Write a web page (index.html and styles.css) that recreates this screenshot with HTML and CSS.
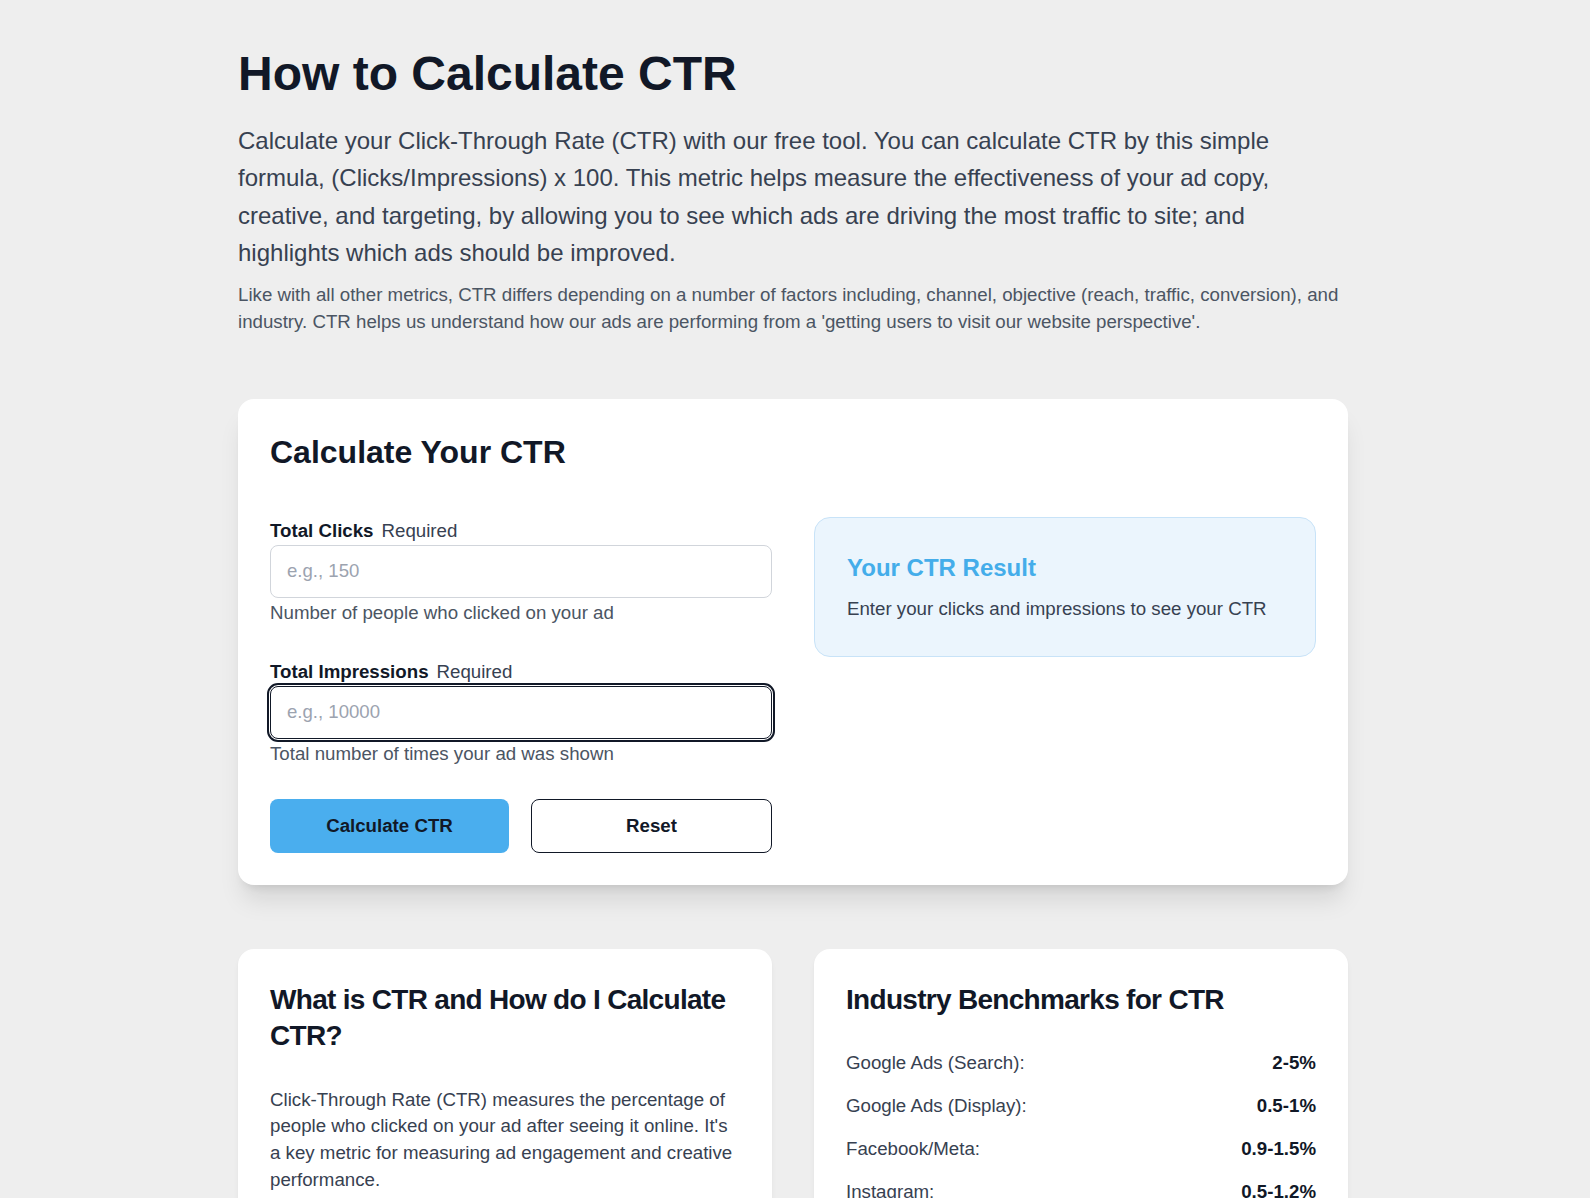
FILE: index.html
```html
<!DOCTYPE html>
<html lang="en">
<head>
<meta charset="utf-8">
<title>How to Calculate CTR</title>
<link rel="stylesheet" href="styles.css">
</head>
<body>
<div class="page">
  <header class="intro">
    <h1 class="title">How to Calculate CTR</h1>
    <p class="lead">Calculate your Click-Through Rate (CTR) with our free tool. You can calculate CTR by this simple formula, (Clicks/Impressions) x 100. This metric helps measure the effectiveness of your ad copy, creative, and targeting, by allowing you to see which ads are driving the most traffic to site; and highlights which ads should be improved.</p>
    <p class="note">Like with all other metrics, CTR differs depending on a number of factors including, channel, objective (reach, traffic, conversion), and industry. CTR helps us understand how our ads are performing from a 'getting users to visit our website perspective'.</p>
  </header>

  <section class="card calc">
    <h2 class="calc-title">Calculate Your CTR</h2>
    <div class="calc-grid">
      <form class="calc-form">
        <div class="field">
          <label class="field-label" for="clicks"><span class="label-name">Total Clicks</span><span class="label-req">Required</span></label>
          <input class="input" id="clicks" type="text" placeholder="e.g., 150">
          <p class="help">Number of people who clicked on your ad</p>
        </div>
        <div class="field">
          <label class="field-label" for="impressions"><span class="label-name">Total Impressions</span><span class="label-req">Required</span></label>
          <input class="input input-focus" id="impressions" type="text" placeholder="e.g., 10000">
          <p class="help">Total number of times your ad was shown</p>
        </div>
        <div class="actions">
          <button class="btn btn-primary" type="button">Calculate CTR</button>
          <button class="btn btn-outline" type="button">Reset</button>
        </div>
      </form>
      <div class="result">
        <h3 class="result-title">Your CTR Result</h3>
        <p class="result-text">Enter your clicks and impressions to see your CTR</p>
      </div>
    </div>
  </section>

  <div class="info-grid">
    <section class="card info">
      <h3 class="info-title info-title-wrap">What is CTR and How do I Calculate CTR?</h3>
      <p class="info-text">Click-Through Rate (CTR) measures the percentage of people who clicked on your ad after seeing it online. It's a key metric for measuring ad engagement and creative performance.</p>
      <p class="info-text info-more">To calculate CTR, divide the total number of clicks by the total number of impressions, then multiply by 100.</p>
    </section>
    <section class="card info">
      <h3 class="info-title">Industry Benchmarks for CTR</h3>
      <dl class="bench">
        <div class="bench-row"><dt>Google Ads (Search):</dt><dd>2-5%</dd></div>
        <div class="bench-row"><dt>Google Ads (Display):</dt><dd>0.5-1%</dd></div>
        <div class="bench-row"><dt>Facebook/Meta:</dt><dd>0.9-1.5%</dd></div>
        <div class="bench-row"><dt>Instagram:</dt><dd>0.5-1.2%</dd></div>
        <div class="bench-row"><dt>LinkedIn:</dt><dd>0.4-0.6%</dd></div>
      </dl>
    </section>
  </div>
</div>
</body>
</html>
```
FILE: styles.css
```css
body {
  margin: 0;
  padding: 0 4px 0 0;
  background: #eeeeee;
  font-family: "Liberation Sans", Arial, Helvetica, sans-serif;
  color: #111827;
}

.page {
  width: 1110px;
  margin: 0 auto;
  padding: 45px 0 64px;
}

.title {
  margin: 0;
  font-size: 48px;
  line-height: 57.6px;
  font-weight: 700;
  color: #111827;
}

.lead {
  margin: 19px 0 0;
  font-size: 24px;
  line-height: 37.5px;
  color: #374151;
}

.note {
  margin: 9px 0 0;
  font-size: 18.7px;
  line-height: 27.4px;
  color: #4b5563;
}

.card {
  background: #ffffff;
  border-radius: 16px;
  padding: 32px;
}

.calc {
  margin-top: 64px;
  box-shadow: 0 20px 25px -5px rgba(0, 0, 0, 0.1), 0 8px 10px -6px rgba(0, 0, 0, 0.1);
}

.calc-title {
  margin: 2px 0 45px;
  font-size: 32px;
  line-height: 38.4px;
  font-weight: 700;
  color: #111827;
}

.calc-grid {
  display: grid;
  grid-template-columns: 1fr 1fr;
  gap: 42px;
  align-items: start;
}

.calc-form {
  margin: 0;
}

.field {
  margin-bottom: 32px;
}

.field-label {
  display: block;
  font-size: 18.7px;
  line-height: 27px;
}

.label-name {
  font-weight: 700;
  color: #111827;
}

.label-req {
  margin-left: 8px;
  color: #374151;
}

.input {
  display: block;
  box-sizing: border-box;
  width: 100%;
  height: 53px;
  margin-top: 1px;
  padding: 0 16px;
  border: 1px solid #d1d5db;
  border-radius: 8px;
  background: #ffffff;
  font-family: "Liberation Sans", Arial, sans-serif;
  font-size: 18.6px;
  color: #111827;
}

.input::placeholder {
  color: #9ca3af;
}

.input-focus {
  border-color: #111827;
  outline: 2px solid #111827;
  outline-offset: 1px;
}

.help {
  margin: 1px 0 0;
  font-size: 18.7px;
  line-height: 27px;
  color: #4b5563;
}

.actions {
  display: flex;
  gap: 22px;
}

.btn {
  flex: 1;
  height: 54px;
  border-radius: 8px;
  font-family: "Liberation Sans", Arial, sans-serif;
  font-size: 18.7px;
  font-weight: 700;
  color: #111827;
  cursor: pointer;
}

.btn-primary {
  background: #4aaeee;
  border: none;
}

.btn-outline {
  background: #ffffff;
  border: 1px solid #111827;
}

.result {
  margin-top: 0;
  padding: 32px 32px 34px;
  background: #ebf5fd;
  border: 1px solid #c8e3f8;
  border-radius: 16px;
}

.result-title {
  margin: 0 0 9px;
  font-size: 24px;
  line-height: 36px;
  font-weight: 700;
  color: #44adea;
}

.result-text {
  margin: 0;
  font-size: 18.7px;
  line-height: 27px;
  color: #374151;
}

.info-grid {
  display: grid;
  grid-template-columns: 1fr 1fr;
  gap: 42px;
  margin-top: 64px;
  align-items: start;
}

.info {
  box-shadow: 0 4px 6px -1px rgba(0, 0, 0, 0.06), 0 2px 4px -2px rgba(0, 0, 0, 0.06);
}

.info-title {
  margin: 1px 0 31px;
  font-size: 28px;
  line-height: 36.4px;
  font-weight: 700;
  letter-spacing: -0.025em;
  color: #111827;
}

.info-title-wrap {
  margin-bottom: 32px;
}

.info-text {
  margin: 0;
  font-size: 18.7px;
  line-height: 26.7px;
  color: #374151;
}

.info-more {
  margin-top: 16px;
}

.bench {
  margin: 0;
}

.bench-row {
  display: flex;
  justify-content: space-between;
  margin-bottom: 16px;
  line-height: 27px;
}

.bench-row dt {
  font-size: 18.7px;
  color: #374151;
}

.bench-row dd {
  margin: 0;
  font-size: 18.7px;
  font-weight: 700;
  color: #111827;
}
```
